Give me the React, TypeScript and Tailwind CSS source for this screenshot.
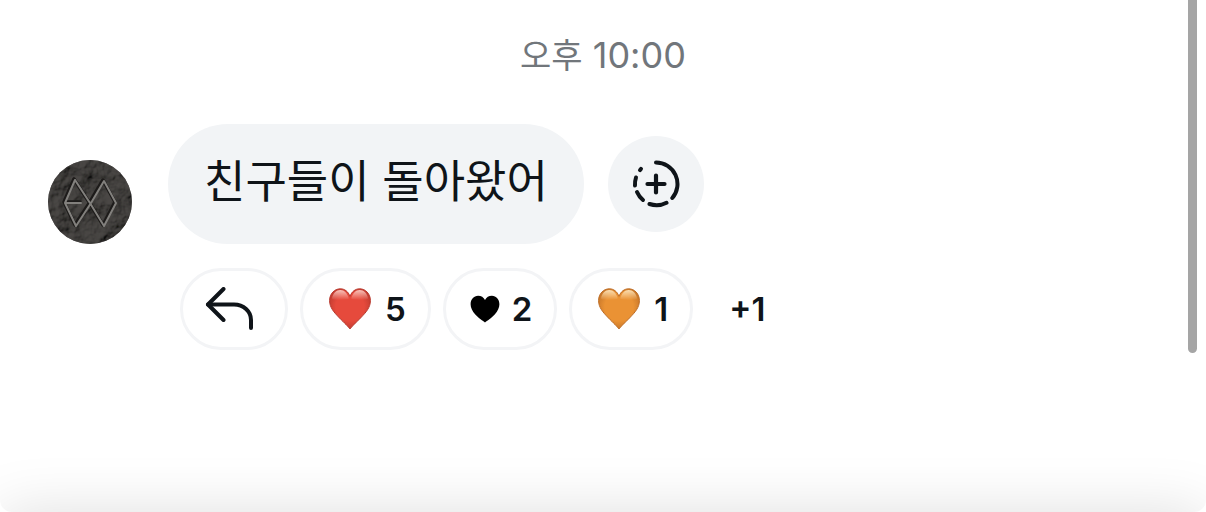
import React from "react";

const HEART =
  "M21 41C19.5 38.8 15 34.6 10.5 30C5 24.3 0.6 19.6 0.6 12.6C0.6 5.6 5.6 0.8 11.3 0.8C15.8 0.8 19.2 3.6 21 8.3C22.8 3.6 26.2 0.8 30.7 0.8C36.4 0.8 41.4 5.6 41.4 12.6C41.4 19.6 37 24.3 31.5 30C27 34.6 22.5 38.8 21 41Z";

type HeartProps = { id: string; light: string; base: string; dark: string; rim: string };

function GlossyHeart({ id, light, base, dark, rim }: HeartProps) {
  return (
    <svg viewBox="0 0 42 42" className="size-[42px]" aria-hidden="true">
      <defs>
        <radialGradient id={`${id}-body`} cx="0.5" cy="0.45" r="0.58">
          <stop offset="0" stopColor={base} />
          <stop offset="0.6" stopColor={base} />
          <stop offset="1" stopColor={dark} />
        </radialGradient>
        <linearGradient id={`${id}-gloss`} x1="0" y1="0" x2="0" y2="1">
          <stop offset="0" stopColor={light} />
          <stop offset="1" stopColor={light} stopOpacity="0" />
        </linearGradient>
        <filter id={`${id}-soft`} x="-20%" y="-20%" width="140%" height="140%">
          <feGaussianBlur stdDeviation="0.7" />
        </filter>
      </defs>
      <path d={HEART} fill={`url(#${id}-body)`} stroke={rim} strokeWidth="1" strokeLinejoin="round" />
      <g fill={`url(#${id}-gloss)`} filter={`url(#${id}-soft)`}>
        <path d="M3 10.5C3.8 5.2 7.3 2 11.3 2C15.3 2 18.3 5.2 19.8 10.4C17 12 5 13 3 10.5Z" />
        <path d="M39 10.5C38.2 5.2 34.7 2 30.7 2C26.7 2 23.7 5.2 22.2 10.4C25 12 37 13 39 10.5Z" />
      </g>
    </svg>
  );
}

function BlackHeart() {
  return (
    <svg viewBox="0 0 30 28" className="h-7 w-[30px]" aria-hidden="true">
      <path
        d="M15 27.4C13 26.2 8.5 23.3 5.3 19.6C2.2 16 0.6 12.6 0.6 9.2C0.6 4.3 3.8 0.7 8.1 0.7C11.2 0.7 13.6 2.2 15 4.9C16.4 2.2 18.8 0.7 21.9 0.7C26.2 0.7 29.4 4.3 29.4 9.2C29.4 12.6 27.8 16 24.7 19.6C21.5 23.3 17 26.2 15 27.4Z"
        fill="#000"
      />
    </svg>
  );
}

function Avatar() {
  const emblem = "M26 19L16 42L27 65L42 42L55 20L67 42L55 65L41 42L26 19M16 42H32";
  return (
    <svg viewBox="0 0 84 84" className="size-[84px] shrink-0 rounded-full" role="img" aria-label="Avatar">
      <defs>
        <filter id="stone" x="0" y="0" width="100%" height="100%">
          <feTurbulence type="fractalNoise" baseFrequency="0.05" numOctaves="4" seed="8" result="noise" />
          <feDiffuseLighting in="noise" surfaceScale="7" lightingColor="#54514f">
            <feDistantLight azimuth="225" elevation="45" />
          </feDiffuseLighting>
        </filter>
      </defs>
      <rect width="84" height="84" fill="#343231" />
      <rect width="84" height="84" filter="url(#stone)" opacity="0.7" />
      <g fill="none" strokeLinejoin="round" strokeLinecap="round">
        <path d={emblem} stroke="#1d1b1a" strokeWidth="3.5" />
        <path d={emblem} stroke="#82807d" strokeWidth="2" transform="translate(1 1)" />
      </g>
    </svg>
  );
}

function AddReactionIcon() {
  return (
    <svg
      viewBox="0 0 48 48"
      className="size-12"
      fill="none"
      stroke="currentColor"
      strokeWidth="4"
      strokeLinecap="round"
      aria-hidden="true"
    >
      <path d="M24 2.5A21.5 21.5 0 0 1 40.3 38" />
      <path d="M34.5 42.8A21.5 21.5 0 0 1 17.5 44" />
      <path d="M11 40A21.5 21.5 0 0 1 5 32" />
      <path d="M3 25.5A21.5 21.5 0 0 1 4 17.5" />
      <path d="M8 10.2L9 8.8" />
      <path d="M24 15.5V32.5M15.5 24H32.5" strokeWidth="4.2" />
    </svg>
  );
}

function ReplyIcon() {
  return (
    <svg
      viewBox="0 0 48 44"
      className="h-11 w-12"
      fill="none"
      stroke="currentColor"
      strokeWidth="4"
      strokeLinecap="round"
      strokeLinejoin="round"
      aria-hidden="true"
    >
      <path d="M18.5 2L3 17.5L18.5 33" />
      <path d="M3 17.5H29C38.5 17.5 46 24.5 46 33V41" />
    </svg>
  );
}

const pill =
  "flex h-[82px] items-center rounded-full border-3 border-[#f3f4f6] bg-white text-[33px] leading-10 font-semibold";

export default function App() {
  return (
    <div className="relative h-screen overflow-hidden rounded-b-xl bg-white font-['Inter','Noto_Sans_CJK_KR',sans-serif] text-[#0f1419]">
      <main className="h-full">
        <p className="pt-[31px] text-center text-4xl leading-[48px] text-[#71767b]">
          <time dateTime="22:00">
            <span className="text-[34px]">오후</span> 10:00
          </time>
        </p>

        <article className="px-12 pt-11">
          <div className="flex items-end gap-9">
            <Avatar />
            <div className="flex items-center gap-6">
              <p className="flex h-[120px] items-center rounded-full bg-[#f2f4f6] px-9 pb-1 text-[45px] leading-[60px] whitespace-nowrap">
                친구들이 돌아왔어
              </p>
              <button
                type="button"
                aria-label="Add reaction"
                className="flex size-24 items-center justify-center rounded-full bg-[#f2f4f6]"
              >
                <AddReactionIcon />
              </button>
            </div>
          </div>

          <div className="flex items-center gap-3 pt-6 pl-33">
            <button type="button" aria-label="Reply" className={`${pill} pr-8 pl-[22px]`}>
              <ReplyIcon />
            </button>
            <button type="button" className={`${pill} gap-[14px] pr-[22px] pl-[26px]`}>
              <GlossyHeart id="red" light="#fbc4bb" base="#e64a3c" dark="#bd3a2f" rim="#b8382d" />
              5
            </button>
            <button type="button" className={`${pill} gap-3 pr-[22px] pl-6`}>
              <BlackHeart />
              2
            </button>
            <button type="button" className={`${pill} gap-[14px] pr-[22px] pl-[26px]`}>
              <GlossyHeart id="orange" light="#fde0b2" base="#ea9234" dark="#c47428" rim="#bd6c25" />
              1
            </button>
            <button type="button" className="px-6 text-[33px] leading-10 font-semibold">
              +1
            </button>
          </div>
        </article>
      </main>

      <div className="absolute top-0 right-[9px] h-[353px] w-[9px] rounded-b-full bg-[#a5a5a5]" />
      <div className="absolute inset-x-0 top-full h-24 shadow-[0_0_60px_rgba(0,0,0,0.13)]" />
    </div>
  );
}
